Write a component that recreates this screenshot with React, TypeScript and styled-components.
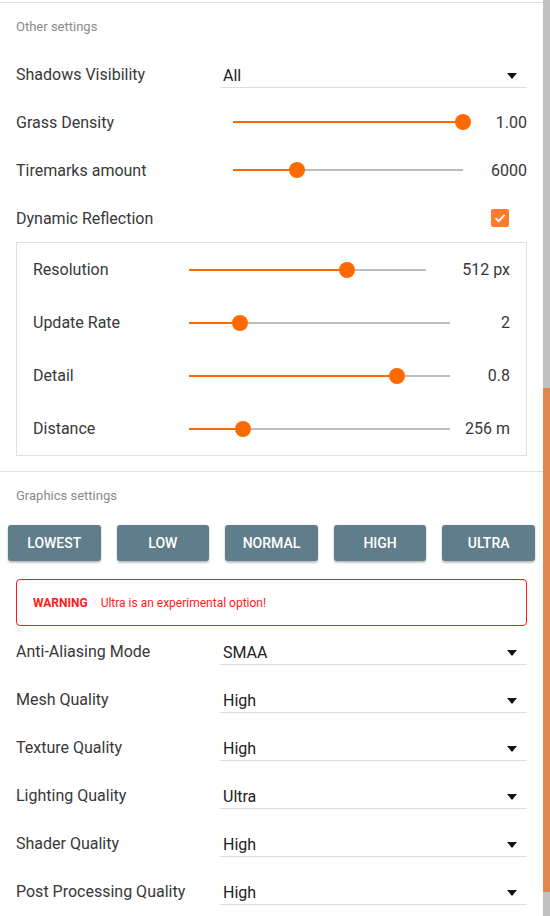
import React from "react";
import styled, { createGlobalStyle } from "styled-components";

const GlobalStyle = createGlobalStyle`
    html, body {
        margin: 0;
        padding: 0;
        background: #fff;
    }
    body {
        font-family: Roboto, "Noto Sans", sans-serif;
        overflow: hidden;
    }
`

const Page = styled.div`
    display: flex;
    width: 550px;
    height: 916px;
    overflow: hidden;
`

const Content = styled.div`
    flex: 1;
    min-width: 0;
    padding-top: 2px;
`

const Scrollbar = styled.div`
    width: 7px;
    flex-shrink: 0;
    background: #c1c1c1;
    display: flex;
    flex-direction: column;
`

const ScrollSpacer = styled.div<{$h:number}>`
    height: ${(p)=>p.$h}px;
    flex-shrink: 0;
`

const ScrollThumb = styled.div`
    height: 504px;
    flex-shrink: 0;
    background: #e2874c;
`

const Section = styled.section`
    border-top: 1px solid #e0e0e0;
`

const SectionTitle = styled.div`
    height: 47px;
    padding-left: 16px;
    display: flex;
    align-items: center;
    font-size: 13px;
    color: #8a8a8a;
`

const Row = styled.div<{$h?:number}>`
    height: ${(p)=>p.$h || 48}px;
    display: flex;
    align-items: center;
    padding: 0 16px;
    box-sizing: border-box;
`

const Label = styled.div<{$w:number}>`
    width: ${(p)=>p.$w}px;
    flex-shrink: 0;
    font-size: 16px;
    color: #383838;
    white-space: nowrap;
`

const Select = styled.div`
    flex: 1;
    height: 30px;
    box-sizing: border-box;
    border-bottom: 1px solid #dcdcdc;
    display: flex;
    align-items: center;
    justify-content: space-between;
    padding: 6px 10px 0 3px;
    font-size: 16px;
    color: #222;
    margin-top: -2px;
`

const Arrow = styled.span`
    width: 0;
    height: 0;
    border-left: 5px solid transparent;
    border-right: 5px solid transparent;
    border-top: 6px solid #111;
`

const SliderTrack = styled.div<{$inset:number}>`
    position: relative;
    flex: 1;
    height: 2px;
    margin-left: ${(p)=>p.$inset}px;
    background: #bdbdbd;
`

const SliderFill = styled.div`
    position: absolute;
    left: 0;
    top: 0;
    bottom: 0;
    background: #ff6a00;
`

const SliderThumb = styled.div`
    position: absolute;
    top: 50%;
    width: 16px;
    height: 16px;
    border-radius: 50%;
    background: #ff6a00;
    transform: translate(-50%, -50%);
`

const Value = styled.div<{$w:number}>`
    width: ${(p)=>p.$w}px;
    flex-shrink: 0;
    text-align: right;
    font-size: 16px;
    color: #383838;
    white-space: nowrap;
`

const Spacer = styled.div`
    flex: 1;
`

const CheckBox = styled.div`
    width: 18px;
    height: 18px;
    margin-right: 18px;
    border-radius: 2px;
    background: #ff7b2c;
    display: flex;
    align-items: center;
    justify-content: center;
`

const SubPanel = styled.div`
    margin: 0 16px 15px;
    border: 1px solid #e0e0e0;
`

const PresetBar = styled.div`
    display: flex;
    gap: 16px;
    padding: 0 8px;
    margin-top: 6px;
`

const PresetButton = styled.button`
    flex: 1;
    height: 36px;
    border: none;
    border-radius: 3px;
    background: #607d8b;
    color: #fff;
    font-family: Roboto, sans-serif;
    font-size: 14px;
    font-weight: 500;
    text-transform: uppercase;
    box-shadow: 0 2px 2px rgba(0,0,0,0.22), 0 0 2px rgba(0,0,0,0.12);
    cursor: pointer;
    padding: 0;
`

const Warning = styled.div`
    margin: 18px 16px 0;
    height: 47px;
    box-sizing: border-box;
    border: 1px solid #ff1a1a;
    border-radius: 4px;
    display: flex;
    align-items: center;
    padding-left: 16px;
    font-size: 12px;
    color: #ff1a1a;
    strong {
        font-weight: 700;
        margin-right: 13px;
    }
`

const SelectList = styled.div`
    margin-top: 1px;
`

const Slider = ({value, inset}:{value:number, inset:number}) => {
    const pct = `${value * 100}%`
    return <SliderTrack $inset={inset}>
        <SliderFill style={{width: pct}} />
        <SliderThumb style={{left: pct}} />
    </SliderTrack>
}

const SelectRow = ({label, value}:{label:string, value:string}) => {
    return <Row>
        <Label $w={204}>{label}</Label>
        <Select>
            <span>{value}</span>
            <Arrow />
        </Select>
    </Row>
}

const reflection = [
    {label:"Resolution", value:0.667, text:"512 px", w:84},
    {label:"Update Rate", value:0.195, text:"2", w:60},
    {label:"Detail", value:0.797, text:"0.8", w:60},
    {label:"Distance", value:0.207, text:"256 m", w:60},
]

const qualities = [
    ["Anti-Aliasing Mode", "SMAA"],
    ["Mesh Quality", "High"],
    ["Texture Quality", "High"],
    ["Lighting Quality", "Ultra"],
    ["Shader Quality", "High"],
    ["Post Processing Quality", "High"],
]

const presets = ["Lowest", "Low", "Normal", "High", "Ultra"]

const App = () => {
    return <>
        <GlobalStyle />
        <Page>
            <Content>
                <Section>
                    <SectionTitle>Other settings</SectionTitle>
                    <SelectRow label="Shadows Visibility" value="All" />
                    <Row>
                        <Label $w={204}>Grass Density</Label>
                        <Slider value={1} inset={13} />
                        <Value $w={64}>1.00</Value>
                    </Row>
                    <Row>
                        <Label $w={204}>Tiremarks amount</Label>
                        <Slider value={0.278} inset={13} />
                        <Value $w={64}>6000</Value>
                    </Row>
                    <Row>
                        <Label $w={204}>Dynamic Reflection</Label>
                        <Spacer />
                        <CheckBox>
                            <svg width="12" height="10" viewBox="0 0 12 10">
                                <path d="M1.5 5.2 L4.6 8.2 L10.6 1.8" fill="none" stroke="#fff" strokeWidth="1.8" />
                            </svg>
                        </CheckBox>
                    </Row>
                    <SubPanel>
                        {reflection.map((r)=>(
                            <Row key={r.label} $h={53}>
                                <Label $w={143}>{r.label}</Label>
                                <Slider value={r.value} inset={13} />
                                <Value $w={r.w}>{r.text}</Value>
                            </Row>
                        ))}
                    </SubPanel>
                </Section>
                <Section>
                    <SectionTitle>Graphics settings</SectionTitle>
                    <PresetBar>
                        {presets.map((p)=><PresetButton key={p}>{p}</PresetButton>)}
                    </PresetBar>
                    <Warning>
                        <strong>WARNING</strong>
                        <span>Ultra is an experimental option!</span>
                    </Warning>
                    <SelectList>
                        {qualities.map(([l, v])=><SelectRow key={l} label={l} value={v} />)}
                    </SelectList>
                </Section>
            </Content>
            <Scrollbar>
                <ScrollSpacer $h={388} />
                <ScrollThumb />
            </Scrollbar>
        </Page>
    </>
}

export default App
